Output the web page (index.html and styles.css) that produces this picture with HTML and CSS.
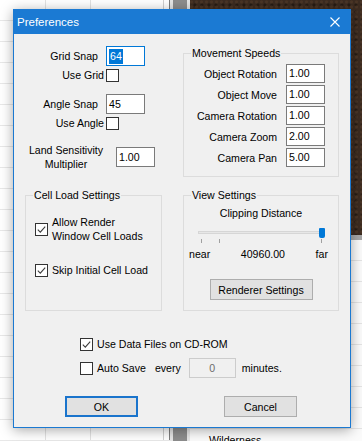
FILE: index.html
```html
<!DOCTYPE html>
<html lang="en">
  <head>
    <meta charset="UTF-8" />
    <meta name="viewport" content="width=device-width, initial-scale=1.0" />
    <title>Preferences</title>
    <link rel="stylesheet" href="styles.css">
  </head>
  <body>
    <!-- Editor windows behind the dialog -->
    <div class="desktop">
      <div class="sheet"></div>
      <div class="scroll"></div>
      <div class="scene">
        <div class="viewport"></div>
        <div class="band"></div>
        <div class="list">
          <div class="list-item">Wilderness</div>
        </div>
      </div>
    </div>

    <!-- Preferences dialog -->
    <div class="dialog">
      <div class="titlebar">
        <span>Preferences</span>
        <svg class="close" width="10" height="10" viewBox="0 0 10 10">
          <path d="M0.5 0.5 L9.5 9.5 M9.5 0.5 L0.5 9.5" stroke="#fff" stroke-width="1.1" fill="none" />
        </svg>
      </div>

      <div class="content">
        <div class="panes">
          <!-- Snap settings -->
          <div class="snaps">
            <div class="field">
              <span class="label">Grid Snap</span>
              <div class="textbox focused"><span class="selected">64</span></div>
            </div>
            <div class="toggle">
              <span class="label">Use Grid</span>
              <div class="box"></div>
            </div>
            <div class="field">
              <span class="label">Angle Snap</span>
              <div class="textbox">45</div>
            </div>
            <div class="toggle">
              <span class="label">Use Angle</span>
              <div class="box"></div>
            </div>
            <div class="land">
              <span class="label">Land Sensitivity<br />Multiplier</span>
              <div class="textbox">1.00</div>
            </div>
          </div>

          <!-- Movement speeds -->
          <div class="group">
            <div class="group-title">Movement Speeds</div>
            <div class="speeds">
              <div class="speed"><span>Object Rotation</span><div class="textbox short">1.00</div></div>
              <div class="speed"><span>Object Move</span><div class="textbox short">1.00</div></div>
              <div class="speed"><span>Camera Rotation</span><div class="textbox short">1.00</div></div>
              <div class="speed"><span>Camera Zoom</span><div class="textbox short">2.00</div></div>
              <div class="speed"><span>Camera Pan</span><div class="textbox short">5.00</div></div>
            </div>
          </div>

          <!-- Cell load settings -->
          <div class="group">
            <div class="group-title">Cell Load Settings</div>
            <div class="cells">
              <div class="check-row">
                <div class="box checked">
                  <svg width="11" height="11" viewBox="0 0 11 11"><path d="M1.8 5.6 L4.3 8.1 L9.2 2.6" stroke="#3c3c3c" stroke-width="1.1" fill="none" /></svg>
                </div>
                <span>Allow Render<br />Window Cell Loads</span>
              </div>
              <div class="check-row">
                <div class="box checked">
                  <svg width="11" height="11" viewBox="0 0 11 11"><path d="M1.8 5.6 L4.3 8.1 L9.2 2.6" stroke="#3c3c3c" stroke-width="1.1" fill="none" /></svg>
                </div>
                <span>Skip Initial Cell Load</span>
              </div>
            </div>
          </div>

          <!-- View settings -->
          <div class="group">
            <div class="group-title">View Settings</div>
            <div class="view">
              <div class="caption">Clipping Distance</div>
              <div class="slider">
                <div class="track"></div>
                <div class="thumb"></div>
              </div>
              <div class="ticks">
                <span class="tick first"></span>
                <span class="tick second"></span>
                <span class="tick last"></span>
              </div>
              <div class="range">
                <span>near</span>
                <span>40960.00</span>
                <span>far</span>
              </div>
              <div class="button renderer">Renderer Settings</div>
            </div>
          </div>
        </div>

        <!-- General options -->
        <div class="options">
          <div class="check-row">
            <div class="box checked">
              <svg width="11" height="11" viewBox="0 0 11 11"><path d="M1.8 5.6 L4.3 8.1 L9.2 2.6" stroke="#3c3c3c" stroke-width="1.1" fill="none" /></svg>
            </div>
            <span>Use Data Files on CD-ROM</span>
          </div>
          <div class="check-row autosave">
            <div class="box"></div>
            <span>Auto Save</span>
            <span class="every">every</span>
            <div class="textbox disabled">0</div>
            <span class="minutes">minutes.</span>
          </div>
        </div>

        <div class="actions">
          <div class="button default">OK</div>
          <div class="button">Cancel</div>
        </div>
      </div>
    </div>
  </body>
</html>
```

FILE: styles.css
```css
body {
  margin: 0;
  width: 362px;
  height: 441px;
  overflow: hidden;
  position: relative;
  font-family: "Liberation Sans", Arial, sans-serif;
  font-size: 10.6px;
  color: #000;
}

/* ---------- background windows ---------- */
.desktop {
  display: grid;
  grid-template-columns: 170px 20px 172px;
  height: 441px;
}
.sheet {
  background-color: #fff;
  background-image:
    repeating-linear-gradient(to bottom, transparent 0 20px, #e8e8e8 20px 21px),
    linear-gradient(to right, transparent 45px, #e2e2e2 45px 46px, transparent 46px 90px,
      #e2e2e2 90px 91px, transparent 91px 163px, #d0d0d0 163px 164px, transparent 164px 169px,
      #7d7d7d 169px 170px);
}
.scroll {
  background: linear-gradient(to right, #e6e6e6 0 3px, #8d8d8d 3px 17px, #e6e6e6 17px);
}
.scene {
  display: flex;
  flex-direction: column;
}
.viewport {
  height: 235px;
  background-color: #3c2b20;
  background-image:
    radial-gradient(circle at 30% 40%, rgba(90, 65, 45, 0.5) 0 1px, transparent 2px),
    radial-gradient(circle at 70% 70%, rgba(25, 18, 12, 0.6) 0 1px, transparent 2px);
  background-size: 5px 5px, 7px 7px;
}
.band {
  height: 5px;
  background: #a8a8a8;
}
.list {
  flex: 1;
  background-color: #fbfbfb;
  background-image: repeating-linear-gradient(to bottom, transparent 0 20px, #e4e4e4 20px 21px);
  padding: 193px 0 0 19px;
}
.list-item {
  line-height: 14px;
}

/* ---------- dialog ---------- */
.dialog {
  position: absolute;
  left: 13px;
  top: 9px;
  width: 338px;
  height: 419px;
  box-sizing: border-box;
  border: 1px solid #1b79d1;
  border-top: none;
  background: #f0f0f0;
  box-shadow: 0 2px 12px rgba(0, 0, 0, 0.35);
}
.titlebar {
  height: 25px;
  margin: 0 -1px;
  padding: 0 11px 0 4px;
  display: flex;
  align-items: center;
  justify-content: space-between;
  background: #1b7ad3;
  color: #fff;
  font-size: 11.5px;
}
.close {
  display: block;
}
.content {
  padding: 12px 11px 0;
}
.panes {
  display: grid;
  grid-template-columns: 137px 156px;
  column-gap: 21px;
  row-gap: 11px;
}

/* text boxes and check boxes */
.textbox {
  width: 39px;
  height: 20px;
  box-sizing: border-box;
  border: 1px solid #7a7a7a;
  background: #fff;
  padding: 0 2px;
  line-height: 18px;
  white-space: nowrap;
}
.textbox.short {
  height: 19px;
  line-height: 17px;
}
.textbox.focused {
  border-color: #0078d7;
}
.selected {
  background: #0078d7;
  color: #fff;
  padding: 1px 1px 2px;
}
.textbox.disabled {
  width: 47px;
  background: #f0f0f0;
  border-color: #cccccc;
  color: #6d6d6d;
  text-align: center;
}
.box {
  width: 13px;
  height: 13px;
  box-sizing: border-box;
  border: 1px solid #333;
  background: #fff;
  flex-shrink: 0;
}
.box svg {
  display: block;
}

/* snap column */
.snaps {
  display: flex;
  flex-direction: column;
}
.field,
.toggle,
.land {
  display: flex;
  align-items: center;
}
.label {
  width: 81px;
  box-sizing: border-box;
  text-align: right;
  padding-right: 8px;
  line-height: 14px;
}
.toggle {
  margin-top: 3px;
}
.toggle .label {
  padding-right: 2px;
  line-height: 13px;
}
.toggle + .field {
  margin-top: 12px;
}
.land {
  margin-top: 13px;
}
.land .label {
  width: 82px;
  padding-right: 0;
  text-align: center;
}
.land .textbox {
  margin-left: 9px;
}

/* group boxes */
.group {
  margin-top: 7px;
  border: 1px solid #dcdcdc;
}
.group-title {
  margin: -8px 0 0 7px;
  padding: 0 1px;
  width: fit-content;
  background: #f0f0f0;
  line-height: 14px;
}
.speeds {
  display: flex;
  flex-direction: column;
  gap: 2px;
  margin-top: 4px;
  padding: 0 13px 9px 0;
}
.speed {
  display: flex;
  align-items: center;
  justify-content: flex-end;
  gap: 9px;
}

.check-row {
  display: flex;
  align-items: center;
  gap: 4px;
  line-height: 14px;
}
.cells {
  display: flex;
  flex-direction: column;
  gap: 20px;
  padding: 13px 0 0 9px;
}

/* view settings */
.view {
  display: flex;
  flex-direction: column;
  padding-bottom: 10px;
}
.caption {
  margin-top: 4px;
  text-align: center;
  line-height: 14px;
}
.slider {
  position: relative;
  height: 10px;
  margin: 8px 13px 0 14px;
}
.track {
  height: 3px;
  margin: 3px 2px 0 0;
  box-sizing: border-box;
  border: 1px solid #d6d6d6;
  background: #e7e7e7;
}
.thumb {
  position: absolute;
  right: 0;
  top: 0;
  width: 6px;
  height: 10px;
  border-radius: 1px 1px 2px 2px;
  background: #0078d7;
}
.ticks {
  display: flex;
  height: 4px;
  margin: 1px 16px 0 17px;
}
.tick {
  width: 1px;
  background: #a0a0a0;
}
.tick.second {
  margin-left: 17px;
}
.tick.last {
  margin-left: auto;
}
.range {
  display: flex;
  justify-content: space-between;
  margin-top: 4px;
  padding: 0 10px 0 5px;
  line-height: 14px;
}

/* buttons */
.button {
  box-sizing: border-box;
  height: 21px;
  border: 1px solid #adadad;
  background: #e1e1e1;
  display: flex;
  align-items: center;
  justify-content: center;
}
.renderer {
  width: 103px;
  margin: 18px auto 0;
}

/* bottom options */
.options {
  display: flex;
  flex-direction: column;
  padding-left: 55px;
  margin-top: 26px;
}
.autosave {
  margin-top: 7px;
}
.every {
  margin-left: 5px;
}
.autosave .textbox {
  margin-left: 4px;
}
.minutes {
  margin-left: 2px;
}
.actions {
  display: flex;
  gap: 86px;
  padding-left: 40px;
  margin-top: 18px;
}
.actions .button {
  width: 73px;
}
.button.default {
  border: 2px solid #1a74cc;
}
```
